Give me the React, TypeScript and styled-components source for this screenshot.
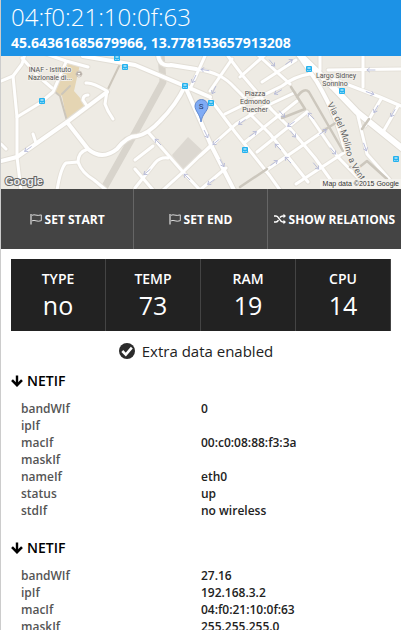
import React from "react";
import styled, { createGlobalStyle } from "styled-components";

const GlobalStyle = createGlobalStyle`
  * { box-sizing: border-box; }
  body {
    margin: 0;
    background: #fff;
    color: #222;
    font-family: "Open Sans", "Noto Sans", sans-serif;
  }
`;

const Panel = styled.main`
  min-height: 100vh;
  border-left: 1px solid #ccc;
  background: #fff;
`;

const Header = styled.header`
  padding: 0 10px 4px;
  background: #1c92e6;
  color: #fff;
`;

const Title = styled.h1`
  margin: 0;
  font-size: 24px;
  font-weight: 300;
  line-height: 34px;
`;

const Coordinates = styled.p`
  margin: 0;
  font-size: 14px;
  font-weight: 700;
  line-height: 18px;
`;

const MapDrawing = styled.svg`
  display: block;
  width: 100%;
  height: auto;
  font-family: Roboto, sans-serif;
`;

const Actions = styled.div`
  display: grid;
  grid-template-columns: repeat(3, 1fr);
  background: #444;
`;

const ActionButton = styled.button`
  display: flex;
  align-items: center;
  justify-content: center;
  gap: 3px;
  height: 60px;
  padding: 0;
  border: 0;
  background: transparent;
  color: #fff;
  font-family: inherit;
  font-size: 12px;
  font-weight: 700;
  white-space: nowrap;
  cursor: pointer;

  &:not(:last-child) { border-right: 1px solid #666; }
  svg { width: 12px; height: 12px; flex: none; }
`;

const Stats = styled.dl`
  display: grid;
  grid-template-columns: repeat(4, 1fr);
  margin: 10px 10px 0;
  background: #222;
  color: #fff;
`;

const Stat = styled.div`
  padding: 9px 0 11px;
  border-right: 1px solid #444;
  text-align: center;
`;

const StatLabel = styled.dt`
  font-size: 14px;
  font-weight: 600;
  line-height: 22px;
`;

const StatValue = styled.dd`
  margin: 0;
  font-size: 25px;
  line-height: 30px;
`;

const Notice = styled.p`
  display: flex;
  align-items: center;
  justify-content: center;
  gap: 7px;
  margin: 10px 10px 0;
  padding-right: 10px;
  font-size: 15px;
  line-height: 20px;

  svg { width: 16px; height: 16px; }
`;

const Interface = styled.section`
  padding: 10px 10px 9px;
`;

const InterfaceTitle = styled.h2`
  display: flex;
  align-items: center;
  gap: 4px;
  margin: 0;
  color: #000;
  font-size: 14px;
  font-weight: 600;
  line-height: 20px;

  svg { width: 12px; height: 12px; }
`;

const Properties = styled.table`
  width: 100%;
  margin-top: 9px;
  table-layout: fixed;
  border-collapse: collapse;
  font-size: 12px;
  font-weight: 600;
  line-height: 17px;
  text-align: left;
`;

const PropertyName = styled.th`
  width: 50%;
  height: 17px;
  padding: 0 0 0 10px;
  color: #555;
  font-weight: 600;
`;

const PropertyValue = styled.td`
  padding: 0;
`;

const FlagIcon = () => (
  <svg viewBox="0 0 12 12" fill="none" stroke="currentColor" aria-hidden="true">
    <path d="M1 1v10.5" strokeWidth="1" />
    <path d="M2 2.3c2.8-1.6 4.6 1.2 9.3-.4v5.8c-4.5 1.7-6.4-1.4-9.3.1" strokeWidth=".8" />
  </svg>
);

const ShuffleIcon = () => (
  <svg viewBox="0 0 12 12" fill="none" stroke="currentColor" strokeWidth="1.5" aria-hidden="true">
    <path d="M0 3h2c3 0 3.500 6 7 6h1M0 9h2c1.200 0 1.900-.8 2.500-1.800M6 4.500C6.600 3.600 7.500 3 9 3h1" />
    <path d="M9.500 .8 12 3 9.500 5.200zM9.500 6.800 12 9 9.500 11.200z" fill="currentColor" stroke="none" />
  </svg>
);

const CheckIcon = () => (
  <svg viewBox="0 0 16 16" aria-hidden="true">
    <circle cx="8" cy="8" r="8" fill="#2b2b2b" />
    <path d="m3.300 8 3.500 3.600 6-7" fill="none" stroke="#fff" strokeWidth="2.600" />
  </svg>
);

const ArrowIcon = () => (
  <svg viewBox="0 0 12 12" fill="none" stroke="currentColor" aria-hidden="true">
    <path d="M6 .5v9" strokeWidth="2.400" />
    <path d="m1 5.200 5 5 5-5" strokeWidth="2.600" />
  </svg>
);

const minorRoads = [
  "M1 81 13 76 22 64 25 54",
  "M13 76 17 117V157L21 190",
  "M22 58 38 76 52 88",
  "M17 117 40 103 53 92 66 62",
  "M46 54 66 61 88 67",
  "M86 83 Q92 82 107 91 L105 104 108 111 113 119",
  "M87 106 83 100Q83 95 88 95",
  "M36 143 33 134",
  "M1 144 6 149",
  "M88 149Q78 152 78 162 82 173 94 180L106 190",
  "M78 162 66 163Q61 167 57 190",
  "M205 56 190 89",
  "M210 91 232 59",
  "M196 69C215 72 225 77 235 88L250 103",
  "M228 56 243 76 272 110 288 126 315 158 333 183",
  "M257 54 290 84",
  "M240 77 266 54",
  "M262 82 296 60",
  "M225 114 282 86Q295 76 310 74",
  "M200 156 236 124 262 108 294 93",
  "M163 190 183 172 211 145",
  "M244 143 297 101",
  "M257 152 307 112",
  "M265 171 325 130",
  "M307 112 337 156 364 184",
  "M296 184 345 152",
  "M211 100 235 132 270 176 280 190",
  "M250 114 270 134 308 182",
  "M148 132 183 172 200 190",
  "M135 160 153 146",
  "M135 169 153 190",
  "M135 188 155 163Q160 157 168 158",
  "M200 190 226 168",
  "M320 54V70",
  "M328 70 401 69",
  "M363 54V87",
  "M333 79 380 97 401 106",
  "M357 112 367 154 390 180",
  "M365 126 381 99",
  "M383 132 398 106",
];

const majorRoads = [
  "M1 161 17 157 67 122 107 92",
  "M67 122 88 149Q102 161 117 149 127 136 137 136 148 134 160 121 176 105 185 86",
  "M83 56 135 65 185 86 210 97",
  "M185 86 211 145 234 190",
  "M158 54Q159 67 171 65L196 69",
  "M298 54 317 82Q338 118 345 150",
];

const trainStops = [
  [117, 58], [125, 67], [42, 101], [185, 86], [211, 103],
  [245, 150], [309, 69], [342, 91], [396, 159],
];

const directionArrows = [
  [205, 70, 190], [194, 79, 116], [214, 90, 116], [206, 134, 64],
  [158, 142, 225], [216, 142, 140], [242, 122, 145], [253, 134, 325],
  [272, 63, 50], [289, 62, 325], [278, 92, 150], [282, 114, 50],
  [291, 124, 145], [147, 172, 140], [187, 177, 225], [211, 182, 145],
  [222, 163, 62], [278, 147, 225], [274, 163, 325], [293, 134, 50],
  [288, 160, 225], [316, 166, 50], [333, 151, 50], [311, 116, 225],
  [323, 132, 325], [371, 70, 180], [370, 93, 20],
  [376, 109, 120], [393, 113, 120], [365, 147, 70], [28, 149, 145],
];

const LocationMap = () => (
  <MapDrawing viewBox="1 56 400 133" role="img" aria-label="Map of the node location">
    <rect x="1" y="56" width="400" height="133" fill="#eeebe4" />
    <path d="M54 91 66 60 80 64 74 91 88 107 67 121 62 96z" fill="#e5d5b3" />
    <path d="m172 155 16-18 17 16-22 19z" fill="#dcd8d1" />
    <g fill="none" strokeLinecap="round" strokeLinejoin="round">
      <path d="M103 190 135 133 163 82 161 54" stroke="#d8d4cc" strokeWidth="7" />
      <path d="M67 121 60 96 54 91M62 94 70 86M107 91 121 62" stroke="#ccc6bb" strokeWidth="2" />
      <g stroke="#e5e1d9" strokeWidth="5">
        {minorRoads.map((d) => <path key={d} d={d} />)}
      </g>
      <g stroke="#e2ded6" strokeWidth="6">
        {majorRoads.map((d) => <path key={d} d={d} />)}
      </g>
      <path d="M299 54 333 87 357 112 403 149" stroke="#e0dcd4" strokeWidth="8" />
      <g stroke="#fff" strokeWidth="3">
        {minorRoads.map((d) => <path key={d} d={d} />)}
      </g>
      <g stroke="#fff" strokeWidth="4">
        {majorRoads.map((d) => <path key={d} d={d} />)}
      </g>
      <path d="M299 54 333 87 357 112 403 149" stroke="#fff" strokeWidth="6" />
      <path
        d="M291 87 305 109 282 118M297 97Q304 87 309 92L343 151M323 131 337 122M362 129 369 119M350 167 357 169 367 161 387 179M240 187 267 169"
        stroke="#ccc7bd"
        strokeWidth="2.500"
      />
      <g stroke="#b3b7d6" strokeWidth=".8">
        {directionArrows.map(([x, y, angle]) => (
          <path key={`${x}-${y}`} d="M-4 0H4M1.500-2 4 0 1.500 2" transform={`translate(${x} ${y}) rotate(${angle})`} />
        ))}
      </g>
    </g>
    {trainStops.map(([x, y]) => (
      <g key={`${x}-${y}`} transform={`translate(${x} ${y})`}>
        <rect x="-3" y="-3" width="6" height="6" rx="1" fill="#25b2ee" />
        <path d="M-1.500-1H1.500M-1.500 1.500h.8M.7 1.500h.8" stroke="#fff" strokeWidth="1" />
      </g>
    ))}
    <circle cx="79" cy="74" r="3" fill="#fff" stroke="#b5aba0" strokeWidth=".6" />
    <path d="M77 75v-2l2-1 2 1v2z" fill="none" stroke="#887b70" strokeWidth=".8" />
    <g fill="#555" stroke="#f3f0ea" strokeWidth="2" paintOrder="stroke" fontSize="7" textAnchor="middle">
      <text x="50" y="72">INAF - Istituto</text>
      <text x="50" y="80">Nazionale di...</text>
      <text x="255" y="96">Piazza</text>
      <text x="255" y="104">Edmondo</text>
      <text x="255" y="112">Puecher</text>
      <text x="336" y="78">Largo Sidney</text>
      <text x="335" y="86">Sonnino</text>
    </g>
    <path id="molino-street" d="M327 104Q340 128 345 146 347 162 360 180" fill="none" />
    <text fill="#666" stroke="#f3f0ea" strokeWidth="2" paintOrder="stroke" fontSize="9">
      <textPath href="#molino-street">Via del Molino a Vento</textPath>
    </text>
    <path d="M201 122C200 114 195 111 195 106A6.500 6.500 0 0 1 208 106C208 111 202 114 201 122z" fill="#7fabf5" stroke="#5f88cf" />
    <text x="201" y="109" fontSize="8" textAnchor="middle" fill="#243d6b">S</text>
    <text x="5" y="185" fontSize="11" fontWeight="700" fill="#eee" stroke="#666" strokeWidth="2" paintOrder="stroke" fontFamily="Liberation Sans">Google</text>
    <rect x="320" y="179" width="81" height="10" fill="#f5f3ef" opacity=".85" />
    <text x="399" y="186" fontSize="7" textAnchor="end" fill="#333" fontFamily="Liberation Sans">Map data ©2015 Google</text>
  </MapDrawing>
);

const stats = [
  { label: "TYPE", value: "no" },
  { label: "TEMP", value: "73" },
  { label: "RAM", value: "19" },
  { label: "CPU", value: "14" },
];

const interfaces = [
  [
    ["bandWIf", "0"],
    ["ipIf", ""],
    ["macIf", "00:c0:08:88:f3:3a"],
    ["maskIf", ""],
    ["nameIf", "eth0"],
    ["status", "up"],
    ["stdIf", "no wireless"],
  ],
  [
    ["bandWIf", "27.16"],
    ["ipIf", "192.168.3.2"],
    ["macIf", "04:f0:21:10:0f:63"],
    ["maskIf", "255.255.255.0"],
  ],
];

export default function App() {
  return (
    <>
      <GlobalStyle />
      <Panel>
        <Header>
          <Title>04:f0:21:10:0f:63</Title>
          <Coordinates>45.64361685679966, 13.778153657913208</Coordinates>
        </Header>
        <LocationMap />
        <Actions>
          <ActionButton type="button"><FlagIcon />SET START</ActionButton>
          <ActionButton type="button"><FlagIcon />SET END</ActionButton>
          <ActionButton type="button"><ShuffleIcon />SHOW RELATIONS</ActionButton>
        </Actions>
        <Stats>
          {stats.map(({ label, value }) => (
            <Stat key={label}>
              <StatLabel>{label}</StatLabel>
              <StatValue>{value}</StatValue>
            </Stat>
          ))}
        </Stats>
        <Notice><CheckIcon />Extra data enabled</Notice>
        {interfaces.map((properties, index) => (
          <Interface key={index}>
            <InterfaceTitle><ArrowIcon />NETIF</InterfaceTitle>
            <Properties>
              <tbody>
                {properties.map(([name, value]) => (
                  <tr key={name}>
                    <PropertyName scope="row">{name}</PropertyName>
                    <PropertyValue>{value}</PropertyValue>
                  </tr>
                ))}
              </tbody>
            </Properties>
          </Interface>
        ))}
      </Panel>
    </>
  );
}
